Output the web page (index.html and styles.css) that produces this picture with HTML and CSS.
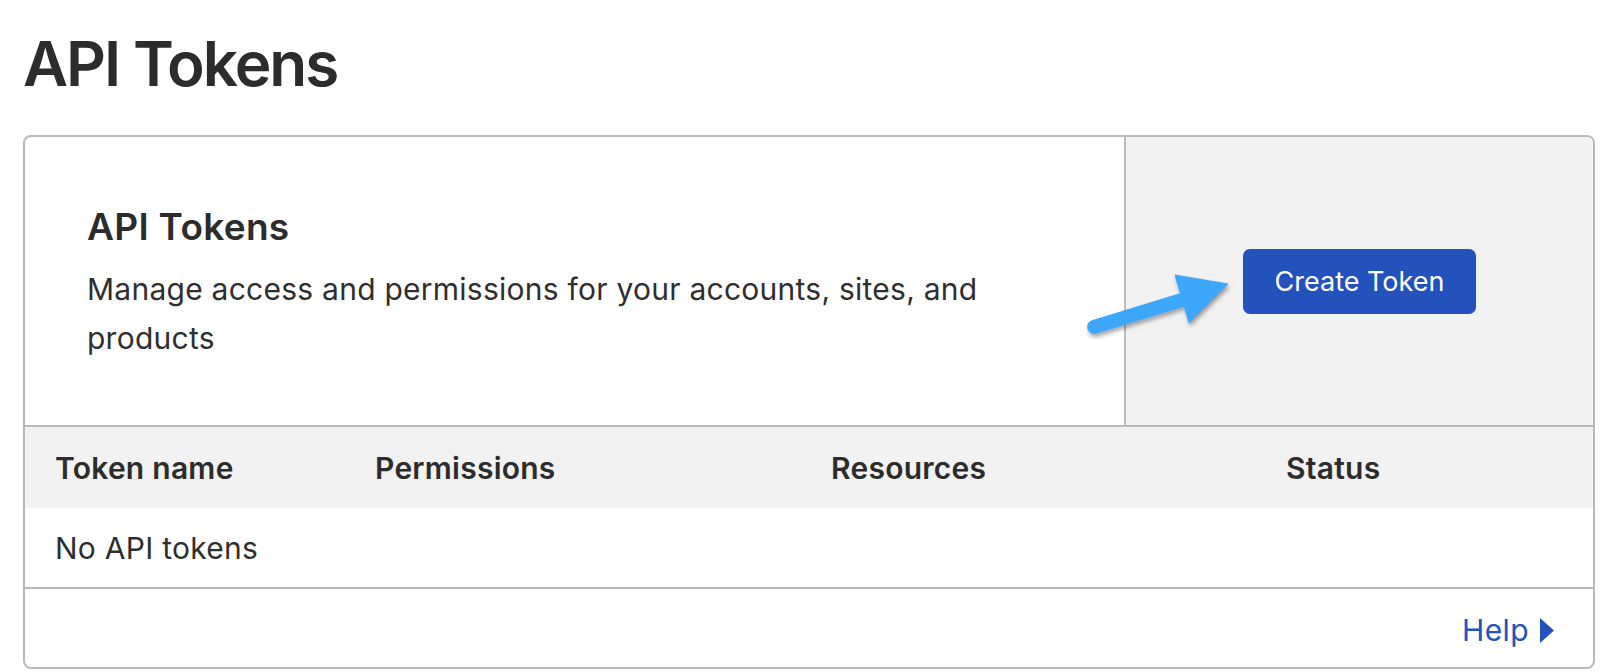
FILE: index.html
```html
<!DOCTYPE html>
<html lang="en">
<head>
<meta charset="utf-8">
<title>API Tokens</title>
<link rel="stylesheet" href="styles.css">
</head>
<body>
<main class="page">
  <h1 class="page-title">API Tokens</h1>
  <section class="card">
    <div class="card-top">
      <div class="intro">
        <h2 class="intro-title">API Tokens</h2>
        <p class="intro-text">Manage access and permissions for your accounts, sites, and products</p>
      </div>
      <div class="action">
        <button class="btn-primary" type="button">Create Token</button>
      </div>
      <svg class="pointer-arrow" width="170" height="80" viewBox="0 0 170 80" aria-hidden="true">
        <defs>
          <filter id="arrowShadow" x="-20%" y="-30%" width="140%" height="170%">
            <feDropShadow dx="1.5" dy="3" stdDeviation="2" flood-color="#000" flood-opacity="0.35"/>
          </filter>
        </defs>
        <g filter="url(#arrowShadow)" fill="#3ea7fb" stroke="#3ea7fb">
          <line x1="12" y1="62" x2="100" y2="35" stroke-width="14" stroke-linecap="round"/>
          <polygon points="93,10 146,19 107,58" stroke-width="1" stroke-linejoin="round"/>
        </g>
      </svg>
    </div>
    <div class="table">
      <div class="table-head">
        <div class="cell">Token name</div>
        <div class="cell">Permissions</div>
        <div class="cell">Resources</div>
        <div class="cell">Status</div>
      </div>
      <div class="table-row">
        <div class="cell">No API tokens</div>
      </div>
    </div>
    <div class="card-footer">
      <a class="help-link" href="#">Help<svg class="help-caret" width="16" height="27" viewBox="0 0 16 27" aria-hidden="true"><polygon points="1,1 15,13.5 1,26" fill="#2352bd"/></svg></a>
    </div>
  </section>
</main>
</body>
</html>
```

FILE: styles.css
```css
* {
  box-sizing: border-box;
}

html, body {
  margin: 0;
  padding: 0;
  background: #ffffff;
}

body {
  font-family: "Inter", "Liberation Sans", sans-serif;
  color: #2f2f2f;
}

.page {
  padding: 0 22px 0 23px;
}

.page-title {
  margin: 33px 0 0 0;
  font-size: 62px;
  line-height: 62px;
  font-weight: 600;
  letter-spacing: -2px;
  color: #2c2c2c;
}

.card {
  margin-top: 40px;
  border: 2px solid #bababa;
  border-radius: 8px;
  overflow: hidden;
  height: 534px;
  display: flex;
  flex-direction: column;
}

.card-top {
  position: relative;
  display: flex;
  height: 290px;
  border-bottom: 2px solid #bababa;
}

.intro {
  width: 1099px;
  padding: 68px 110px 0 62px;
}

.intro-title {
  margin: 0;
  font-size: 37px;
  line-height: 44px;
  font-weight: 600;
  letter-spacing: 0.3px;
  color: #2c2c2c;
}

.intro-text {
  margin: 16px 0 0 0;
  font-size: 30px;
  line-height: 49px;
  font-weight: 400;
  letter-spacing: 0.25px;
  color: #2f2f2f;
}

.action {
  flex: 1;
  display: flex;
  align-items: center;
  justify-content: center;
  background: #f2f2f2;
  border-left: 2px solid #bababa;
}

.btn-primary {
  width: 233px;
  height: 65px;
  border: none;
  border-radius: 7px;
  background: #2352bd;
  color: #ffffff;
  font-family: "Inter", "Liberation Sans", sans-serif;
  font-size: 27px;
  font-weight: 400;
  padding: 0;
  margin-top: 1px;
}

.pointer-arrow {
  position: absolute;
  left: 1057px;
  top: 128px;
}

.table-head {
  display: grid;
  grid-template-columns: 320px 456px 455px 1fr;
  align-items: center;
  height: 81px;
  padding-left: 30px;
  background: #f2f2f2;
  font-size: 30px;
  font-weight: 600;
  letter-spacing: 0.25px;
  color: #2c2c2c;
}

.table-row {
  display: flex;
  align-items: center;
  height: 81px;
  padding-left: 30px;
  border-bottom: 2px solid #bababa;
  font-size: 30px;
  letter-spacing: 0.25px;
  color: #2f2f2f;
}

.card-footer {
  flex: 1;
  display: flex;
  align-items: center;
  justify-content: flex-end;
  padding: 4px 38px 0 0;
}

.help-link {
  display: flex;
  align-items: center;
  gap: 10px;
  font-size: 30px;
  letter-spacing: 0.4px;
  color: #2352bd;
  text-decoration: none;
}

.help-caret {
  display: block;
}
```
